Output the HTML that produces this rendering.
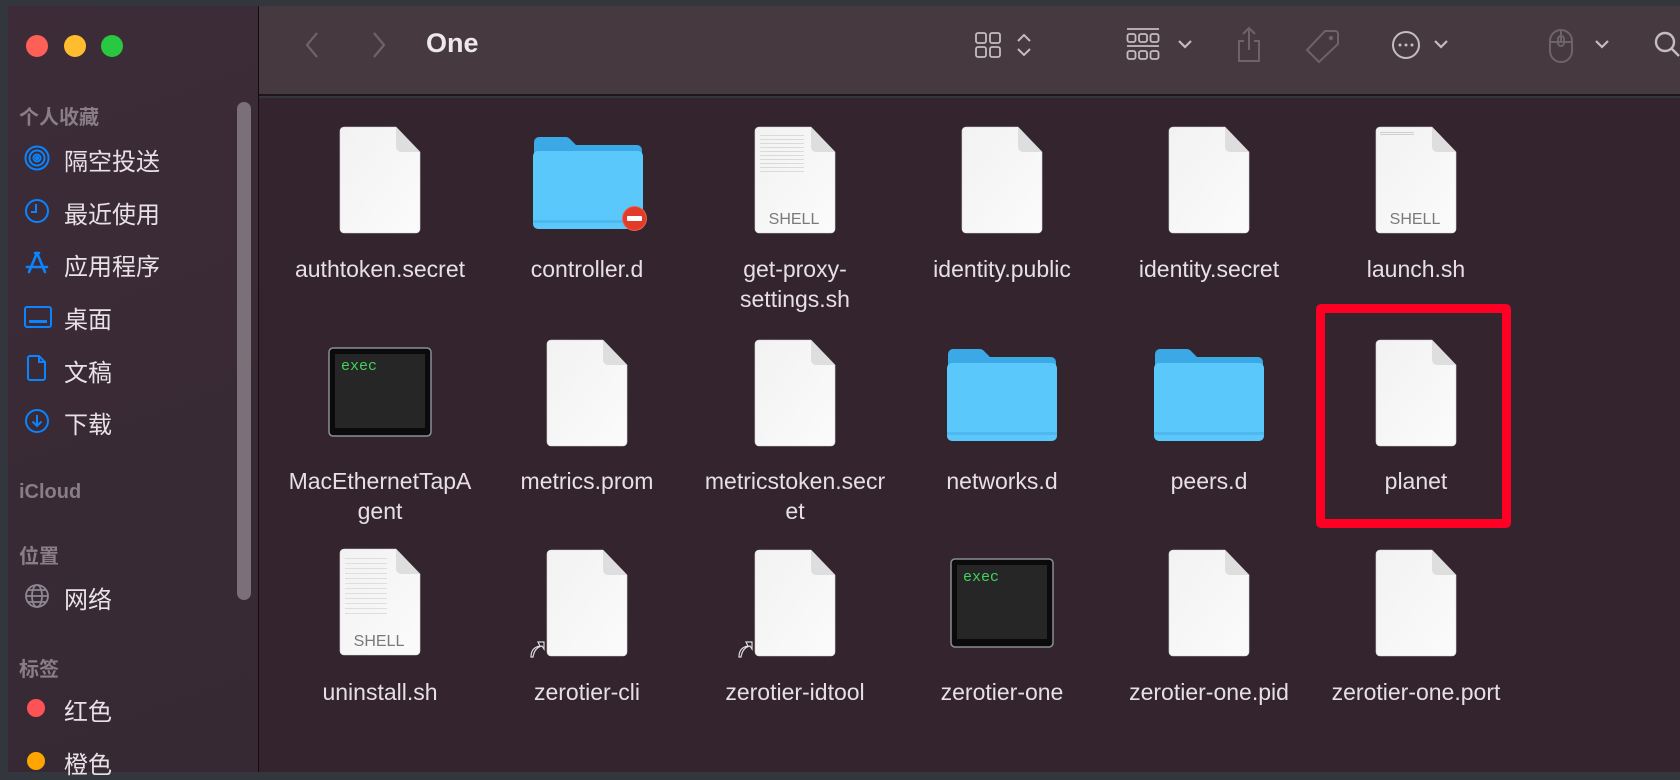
<!DOCTYPE html>
<html><head><meta charset="utf-8">
<style>
*{margin:0;padding:0;box-sizing:border-box}
body{width:1680px;height:772px;overflow:hidden;background:#33363c;font-family:"Liberation Sans","Noto Sans CJK SC",sans-serif;position:relative}
.side{position:absolute;left:8px;top:6px;width:250px;height:766px;background:linear-gradient(160deg,#3d2c38,#382a34 60%,#372933)}
.tb{position:absolute;left:259px;top:6px;width:1421px;height:90px;background:#463a40;border-bottom:2px solid #1e1719}
.main{position:absolute;left:259px;top:98px;width:1421px;height:674px;background:#33242e}
.vline{position:absolute;left:258px;top:6px;width:1px;height:766px;background:#120c10}
.dot{position:absolute;width:22px;height:22px;border-radius:50%;top:35px}
.hd{position:absolute;left:19px;color:#8a7e86;font-size:20px;font-weight:bold}
.it{position:absolute;left:64px;color:#e8e2e6;font-size:24px}
.ic{position:absolute;left:24px}
.lbl{position:absolute;width:240px;margin-left:-15px;text-align:center;color:#e6e0e4;font-size:23px;line-height:30px;white-space:nowrap}
.f{position:absolute}
.shell{position:absolute;width:80px;text-align:center;color:#7a7a7a;font-size:16px}
</style></head><body>
<div class="side"></div>
<div class="tb"></div>
<div class="main"></div>
<div class="vline"></div>

<div class="dot" style="left:26px;background:#fe5f57"></div>
<div class="dot" style="left:64px;background:#febc2e"></div>
<div class="dot" style="left:101px;background:#28c840"></div>

<div style="position:absolute;left:237px;top:102px;width:14px;height:498px;border-radius:7px;background:#7b6f78"></div>

<div class="hd" style="top:101px">个人收藏</div>
<svg class="ic" style="top:145px" width="26" height="26" viewBox="0 0 26 26" fill="none" stroke="#0a84ff" stroke-width="2"><circle cx="13" cy="13" r="11.5"/><circle cx="13" cy="13" r="7.5"/><circle cx="13" cy="13" r="3.5"/><circle cx="13" cy="13" r="1" fill="#0a84ff"/></svg>
<div class="it" style="top:142px">隔空投送</div>
<svg class="ic" style="top:198px" width="26" height="26" viewBox="0 0 26 26" fill="none" stroke="#0a84ff" stroke-width="2"><circle cx="13" cy="13" r="11"/><path d="M12 6v8h-5"/></svg>
<div class="it" style="top:195px">最近使用</div>
<svg class="ic" style="top:250px" width="26" height="26" viewBox="0 0 26 26" fill="none" stroke="#0a84ff" stroke-width="2.6" stroke-linecap="round"><path d="M13 3 L5 22 M13 3 L21 22 M3 17 H23 M11 3h4"/></svg>
<div class="it" style="top:247px">应用程序</div>
<svg class="ic" style="top:305px" width="28" height="24" viewBox="0 0 28 24" fill="none" stroke="#0a84ff" stroke-width="2"><rect x="1" y="2" width="26" height="20" rx="2"/><rect x="5" y="15" width="18" height="3" fill="#0a84ff" stroke="none"/></svg>
<div class="it" style="top:300px">桌面</div>
<svg class="ic" style="top:355px" width="26" height="26" viewBox="0 0 26 26" fill="none" stroke="#0a84ff" stroke-width="2"><path d="M6 1h9l6 6v16a2 2 0 0 1-2 2H6a2 2 0 0 1-2-2V3a2 2 0 0 1 2-2zM15 1v6h6"/></svg>
<div class="it" style="top:353px">文稿</div>
<svg class="ic" style="top:408px" width="26" height="26" viewBox="0 0 26 26" fill="none" stroke="#0a84ff" stroke-width="2"><circle cx="13" cy="13" r="11"/><path d="M13 7v11M8.5 13.5 13 18l4.5-4.5"/></svg>
<div class="it" style="top:405px">下载</div>
<div class="hd" style="top:481px">iCloud</div>
<div class="hd" style="top:540px">位置</div>
<svg class="ic" style="top:583px" width="26" height="26" viewBox="0 0 26 26" fill="none" stroke="#8e8690" stroke-width="1.8"><circle cx="13" cy="13" r="11"/><ellipse cx="13" cy="13" rx="5" ry="11"/><path d="M2 13h22M4 7h18M4 19h18"/></svg>
<div class="it" style="top:580px">网络</div>
<div class="hd" style="top:653px">标签</div>
<div style="position:absolute;left:27px;top:699px;width:18px;height:18px;border-radius:50%;background:#fe5257"></div>
<div class="it" style="top:692px">红色</div>
<div style="position:absolute;left:27px;top:752px;width:18px;height:18px;border-radius:50%;background:#ffa500"></div>
<div class="it" style="top:745px">橙色</div>

<svg style="position:absolute;left:303px;top:30px" width="18" height="30" viewBox="0 0 18 30" fill="none" stroke="#6e6468" stroke-width="2.2"><path d="M14 3 4 15l10 12"/></svg>
<svg style="position:absolute;left:370px;top:30px" width="18" height="30" viewBox="0 0 18 30" fill="none" stroke="#6e6468" stroke-width="2.2"><path d="M4 3l10 12L4 27"/></svg>
<div style="position:absolute;left:426px;top:28px;color:#eee8ec;font-size:27px;font-weight:bold">One</div>
<svg style="position:absolute;left:974px;top:31px" width="28" height="28" viewBox="0 0 28 28" fill="none" stroke="#c4bcc0" stroke-width="1.8"><rect x="2" y="2" width="10" height="10" rx="2"/><rect x="16" y="2" width="10" height="10" rx="2"/><rect x="2" y="16" width="10" height="10" rx="2"/><rect x="16" y="16" width="10" height="10" rx="2"/></svg>
<svg style="position:absolute;left:1015px;top:31px" width="18" height="28" viewBox="0 0 18 28" fill="none" stroke="#c4bcc0" stroke-width="2"><path d="M3 10l6-6 6 6M3 18l6 6 6-6"/></svg>
<svg style="position:absolute;left:1126px;top:27px" width="34" height="36" viewBox="0 0 34 36" fill="none" stroke="#c4bcc0" stroke-width="1.8"><path d="M1 2h32M1 19h32"/><rect x="1.5" y="7" width="8" height="8" rx="2"/><rect x="13" y="7" width="8" height="8" rx="2"/><rect x="24.5" y="7" width="8" height="8" rx="2"/><rect x="1.5" y="24" width="8" height="8" rx="2"/><rect x="13" y="24" width="8" height="8" rx="2"/><rect x="24.5" y="24" width="8" height="8" rx="2"/></svg>
<svg style="position:absolute;left:1177px;top:38px" width="16" height="12" viewBox="0 0 16 12" fill="none" stroke="#c4bcc0" stroke-width="2.2"><path d="M2 3l6 6 6-6"/></svg>
<svg style="position:absolute;left:1236px;top:26px" width="26" height="38" viewBox="0 0 26 38" fill="none" stroke="#6e6468" stroke-width="2"><path d="M13 2v22M7 8l6-6 6 6M8 15H3v20h20V15h-5"/></svg>
<svg style="position:absolute;left:1305px;top:28px" width="36" height="36" viewBox="0 0 36 36" fill="none" stroke="#6e6468" stroke-width="2"><path d="M20 3h10a3 3 0 0 1 3 3v10L14 34 2 22z"/><circle cx="26" cy="10" r="1.2" fill="#6e6468"/></svg>
<svg style="position:absolute;left:1391px;top:30px" width="30" height="30" viewBox="0 0 30 30" fill="none" stroke="#c4bcc0" stroke-width="2"><circle cx="15" cy="15" r="13"/><circle cx="9" cy="15" r="1.5" fill="#c4bcc0" stroke="none"/><circle cx="15" cy="15" r="1.5" fill="#c4bcc0" stroke="none"/><circle cx="21" cy="15" r="1.5" fill="#c4bcc0" stroke="none"/></svg>
<svg style="position:absolute;left:1433px;top:38px" width="16" height="12" viewBox="0 0 16 12" fill="none" stroke="#c4bcc0" stroke-width="2.2"><path d="M2 3l6 6 6-6"/></svg>
<svg style="position:absolute;left:1548px;top:28px" width="26" height="36" viewBox="0 0 26 36" fill="none" stroke="#6e6468" stroke-width="2"><rect x="2" y="2" width="22" height="32" rx="11"/><path d="M13 2v12M2 14h22"/><rect x="10" y="8" width="6" height="10" rx="3"/></svg>
<svg style="position:absolute;left:1594px;top:38px" width="16" height="12" viewBox="0 0 16 12" fill="none" stroke="#c4bcc0" stroke-width="2.2"><path d="M2 3l6 6 6-6"/></svg>
<svg style="position:absolute;left:1653px;top:30px" width="27" height="30" viewBox="0 0 27 30" fill="none" stroke="#c4bcc0" stroke-width="2.4"><circle cx="12" cy="12" r="9"/><path d="M18.5 18.5 26 26"/></svg>

<svg width="0" height="0" style="position:absolute">
<defs>
<linearGradient id="pg" x1="0" y1="0" x2="1" y2="1"><stop offset="0" stop-color="#f2f2f2"/><stop offset="1" stop-color="#fbfbfb"/></linearGradient>
<symbol id="doc" viewBox="0 0 82 108"><path d="M5 1h52l24 25v77a4 4 0 0 1-4 4H5a4 4 0 0 1-4-4V5a4 4 0 0 1 4-4z" fill="url(#pg)" stroke="#d6d6d6" stroke-width=".6"/><path d="M57 1v20a5 5 0 0 0 5 5h19z" fill="#dedede"/></symbol>
<symbol id="fold" viewBox="0 0 112 94"><path d="M2 6a5 5 0 0 1 5-5h26a6 6 0 0 1 5 2l6 6h61a5 5 0 0 1 5 5v74a5 5 0 0 1-5 5H7a5 5 0 0 1-5-5z" fill="#3aa9e6"/><rect x="1" y="15" width="110" height="78" rx="5" fill="#5ac8fb"/><rect x="1" y="84" width="110" height="3" fill="#4fb8ee"/></symbol>
<symbol id="exec" viewBox="0 0 104 90"><rect x="1" y="1" width="102" height="88" rx="4" fill="#0b0b0b" stroke="#8a9096" stroke-width="1.5"/><rect x="7" y="7" width="90" height="74" fill="#262626"/><text x="13" y="23" font-family="Liberation Mono,monospace" font-size="15" fill="#3fd45c">exec</text></symbol>
<symbol id="alias" viewBox="0 0 16 18"><path d="M2 17c0-6 3-10 9-11l-2-4h6v7l-2-3c-5 1-8 5-9 11z" fill="#222" stroke="#ddd" stroke-width="1.2"/></symbol>
</defs></svg>

<svg class="f" style="left:339px;top:126px" width="82" height="108"><use href="#doc"/></svg>
<div class="lbl" style="left:275px;top:254px">authtoken.secret</div>
<svg class="f" style="left:532px;top:136px" width="112" height="94"><use href="#fold"/></svg>
<div class="f" style="left:622px;top:206px;width:25px;height:25px;border-radius:50%;background:#e23b2a;border:1px solid #fff3"></div>
<div class="f" style="left:627px;top:216px;width:15px;height:5px;background:#fff;border-radius:1px"></div>
<div class="lbl" style="left:482px;top:254px">controller.d</div>
<svg class="f" style="left:754px;top:126px" width="82" height="108"><use href="#doc"/></svg>
<div class="f" style="left:760px;top:132px;width:44px;height:40px;background:repeating-linear-gradient(#fff0 0 3px,#cfcfcf 3px 4px);opacity:.7"></div>
<div class="shell" style="left:754px;top:211px">SHELL</div>
<div class="lbl" style="left:690px;top:254px">get-proxy-<br>settings.sh</div>
<svg class="f" style="left:961px;top:126px" width="82" height="108"><use href="#doc"/></svg>
<div class="lbl" style="left:897px;top:254px">identity.public</div>
<svg class="f" style="left:1168px;top:126px" width="82" height="108"><use href="#doc"/></svg>
<div class="lbl" style="left:1104px;top:254px">identity.secret</div>
<svg class="f" style="left:1375px;top:126px" width="82" height="108"><use href="#doc"/></svg>
<div class="f" style="left:1380px;top:131px;width:34px;height:5px;background:repeating-linear-gradient(#fff0 0 1px,#cfcfcf 1px 2px)"></div>
<div class="shell" style="left:1375px;top:211px">SHELL</div>
<div class="lbl" style="left:1311px;top:254px">launch.sh</div>

<svg class="f" style="left:328px;top:347px" width="104" height="90"><use href="#exec"/></svg>
<div class="lbl" style="left:275px;top:466px">MacEthernetTapA<br>gent</div>
<svg class="f" style="left:546px;top:339px" width="82" height="108"><use href="#doc"/></svg>
<div class="lbl" style="left:482px;top:466px">metrics.prom</div>
<svg class="f" style="left:754px;top:339px" width="82" height="108"><use href="#doc"/></svg>
<div class="lbl" style="left:690px;top:466px">metricstoken.secr<br>et</div>
<svg class="f" style="left:946px;top:348px" width="112" height="94"><use href="#fold"/></svg>
<div class="lbl" style="left:897px;top:466px">networks.d</div>
<svg class="f" style="left:1153px;top:348px" width="112" height="94"><use href="#fold"/></svg>
<div class="lbl" style="left:1104px;top:466px">peers.d</div>
<svg class="f" style="left:1375px;top:339px" width="82" height="108"><use href="#doc"/></svg>
<div class="lbl" style="left:1311px;top:466px">planet</div>
<div class="f" style="left:1316px;top:304px;width:195px;height:224px;border:9px solid #ff0025;border-radius:5px"></div>

<svg class="f" style="left:339px;top:548px" width="82" height="108"><use href="#doc"/></svg>
<div class="f" style="left:345px;top:554px;width:42px;height:60px;background:repeating-linear-gradient(#fff0 0 4px,#d4d4d4 4px 5px);opacity:.7"></div>
<div class="shell" style="left:339px;top:633px">SHELL</div>
<div class="lbl" style="left:275px;top:677px">uninstall.sh</div>
<svg class="f" style="left:546px;top:549px" width="82" height="108"><use href="#doc"/></svg>
<svg class="f" style="left:529px;top:640px" width="16" height="18"><use href="#alias"/></svg>
<div class="lbl" style="left:482px;top:677px">zerotier-cli</div>
<svg class="f" style="left:754px;top:549px" width="82" height="108"><use href="#doc"/></svg>
<svg class="f" style="left:737px;top:640px" width="16" height="18"><use href="#alias"/></svg>
<div class="lbl" style="left:690px;top:677px">zerotier-idtool</div>
<svg class="f" style="left:950px;top:558px" width="104" height="90"><use href="#exec"/></svg>
<div class="lbl" style="left:897px;top:677px">zerotier-one</div>
<svg class="f" style="left:1168px;top:549px" width="82" height="108"><use href="#doc"/></svg>
<div class="lbl" style="left:1104px;top:677px">zerotier-one.pid</div>
<svg class="f" style="left:1375px;top:549px" width="82" height="108"><use href="#doc"/></svg>
<div class="lbl" style="left:1311px;top:677px">zerotier-one.port</div>
</body></html>
